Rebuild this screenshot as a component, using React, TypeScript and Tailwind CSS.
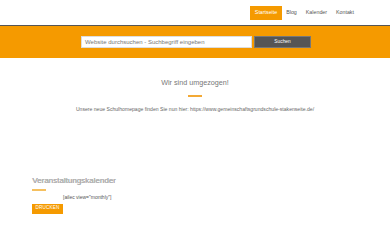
export default function App() {
  return (
    <div className="w-[390px] h-[240px] bg-white overflow-hidden font-['Liberation_Sans',Arial,sans-serif]">
      {/* top nav */}
      <div className="h-[25px] flex items-center justify-end pr-[36px] text-[5.3px] text-[#555]">
        <a className="h-[14px] px-[5px] flex items-center bg-[#f59a00] text-white">Startseite</a>
        <a className="ml-[4px]">Blog</a>
        <a className="ml-[9px]">Kalender</a>
        <a className="ml-[9px]">Kontakt</a>
      </div>

      {/* search band */}
      <div className="border-t-[1.5px] border-[#555] bg-[#f59a00] h-[33px] flex items-center justify-center gap-[2px] pl-[2px]">
        <div className="w-[171px] h-[12px] bg-white border border-[#ddd] flex items-center px-[3px] text-[6px] text-[#777]">
          Website durchsuchen - Suchbegriff eingeben
        </div>
        <button className="w-[57px] h-[12px] bg-[#555] border border-[#777] text-white text-[4.8px] flex items-center justify-center">
          Suchen
        </button>
      </div>

      {/* moved notice */}
      <div className="flex flex-col items-center pt-[21px]">
        <h1 className="text-[7.2px] font-normal text-[#777] leading-none">Wir sind umgezogen!</h1>
        <div className="mt-[9px] w-[14px] h-[1.5px] bg-[#f3a935]" />
        <p className="mt-[10px] text-[5.1px] text-[#666] leading-none">
          Unsere neue Schulhomepage finden Sie nun hier: https://www.gemeinschaftsgrundschule-stakenseite.de/
        </p>
      </div>

      {/* calendar */}
      <div className="pl-[32px] pt-[65px]">
        <h2 className="text-[8px] leading-none text-[#bbb] [text-shadow:0.4px_0.4px_0_#8a8a8a]">Veranstaltungskalender</h2>
        <div className="mt-[4px] w-[14px] h-[2px] bg-[#f5c060]" />
        <p className="mt-[4px] pl-[31px] text-[5px] text-[#555] leading-none">[ailec view="monthly"]</p>
        <button className="mt-[4px] w-[31px] h-[10px] bg-[#f59a00] text-white text-[4.6px] tracking-[0.2px] flex items-center justify-center">
          DRUCKEN
        </button>
      </div>
    </div>
  )
}
